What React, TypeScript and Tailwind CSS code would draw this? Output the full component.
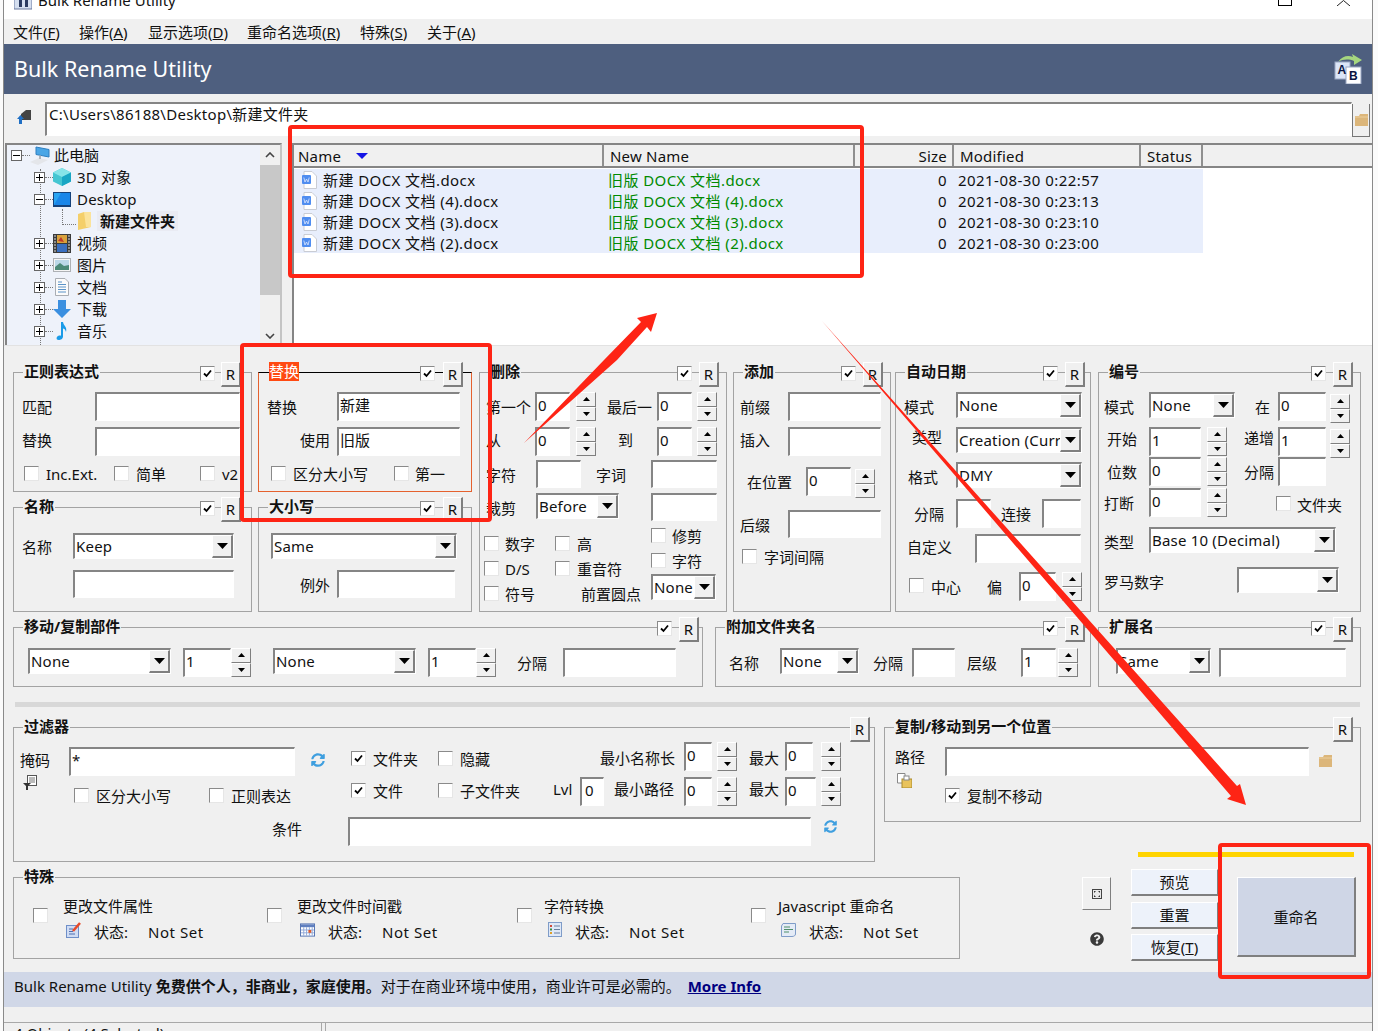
import type { ReactNode } from "react";
import { twMerge as cn } from "tailwind-merge";
import { FaQuestionCircle, FaSyncAlt } from "react-icons/fa";

type P = { className?: string; children?: ReactNode };

const raised = "bg-[#f0f0f0] border border-t-white border-l-white border-r-[#7f7f7f] border-b-[#7f7f7f]";

function L({ className, children }: P) {
  return <span className={cn("shrink-0 whitespace-nowrap mt-[5px]", className)}>{children}</span>;
}

function Row({ className, children }: P) {
  return <div className={cn("flex items-start", className)}>{children}</div>;
}

function Check({ on, className }: { on?: boolean; className?: string }) {
  return (
    <span className={cn("flex shrink-0 w-[15px] h-[15px] items-center justify-center bg-white border border-t-[#8a8a8a] border-l-[#8a8a8a] border-r-[#e6e6e6] border-b-[#e6e6e6]", className)}>
      {on && (
        <svg width="9" height="9" viewBox="0 0 9 9">
          <path d="M1 4.5 L3.5 7 L8 1.5" fill="none" stroke="#000" strokeWidth="1.8" />
        </svg>
      )}
    </span>
  );
}

function Field({ className, children }: P) {
  return (
    <div className={cn("shrink-0 h-[29px] bg-white border-t-2 border-l-2 border-r border-b border-t-[#858585] border-l-[#858585] border-r-white border-b-white pl-[1px] pt-[1px] overflow-hidden whitespace-nowrap", className)}>
      {children}
    </div>
  );
}

function Select({ className, children }: P) {
  return (
    <div className={cn("shrink-0 flex h-[26px] bg-white border-t-2 border-l-2 border-r border-b border-t-[#858585] border-l-[#858585] border-r-white border-b-white", className)}>
      <span className="flex-1 min-w-0 pl-[1px] pt-[1px] overflow-hidden whitespace-nowrap tracking-[0.2px]">{children}</span>
      <span className={cn(raised, "flex w-[21px] shrink-0 items-center justify-center border-r-2 border-b-2")}>
        <svg width="11" height="6" viewBox="0 0 11 6"><path d="M0 0H11L5.5 6Z" fill="#000" /></svg>
      </span>
    </div>
  );
}

function Spin({ className }: { className?: string }) {
  return (
    <div className={cn("flex flex-col shrink-0 w-[20px] h-[29px]", className)}>
      <span className={cn(raised, "flex h-1/2 items-center justify-center")}>
        <svg width="7" height="4" viewBox="0 0 7 4"><path d="M0 4L3.5 0L7 4Z" fill="#000" /></svg>
      </span>
      <span className={cn(raised, "flex h-1/2 items-center justify-center")}>
        <svg width="7" height="4" viewBox="0 0 7 4"><path d="M0 0L3.5 4L7 0Z" fill="#000" /></svg>
      </span>
    </div>
  );
}

function Group(props: P & { title: ReactNode; ck?: string; rk?: string; check?: boolean; reset?: boolean; titleClass?: string }) {
  const { title, ck, rk, check = true, reset = true, className, titleClass, children } = props;
  return (
    <div className={cn("relative shrink-0 border border-[#a3a3a3]", className)}>
      <span className={cn("absolute left-[9px] -top-[11px] bg-[#f0f0f0] px-[1px] font-bold text-[15px] leading-[19px] whitespace-nowrap", titleClass)}>{title}</span>
      {check && <Check on className={cn("absolute -top-[7px] right-[34px]", ck)} />}
      {reset && <span className={cn(raised, "absolute -top-[11px] right-[7px] flex w-[20px] h-[25px] items-center justify-center border-r-2 border-b-2", rk)}>R</span>}
      {children}
    </div>
  );
}

function DocIcon() {
  return (
    <svg width="16" height="18" viewBox="0 0 16 18" className="shrink-0">
      <path d="M3 .5H11L15.5 5V17.5H3Z" fill="#fff" stroke="#c9ccd4" />
      <rect x="1" y="4" width="9" height="9" rx="1" fill="#4f8df0" />
      <path d="M2.8 6.5L4 11L5.5 8L7 11L8.2 6.5" fill="none" stroke="#dfe9fd" strokeWidth=".8" />
    </svg>
  );
}

function FolderTan() {
  return (
    <svg width="13" height="12" viewBox="0 0 13 12" className="shrink-0">
      <path d="M0 2H4L5 0H13V12H0Z" fill="#dcb67a" />
      <path d="M0 3H13" stroke="#eccf9d" />
    </svg>
  );
}

function Exp({ open }: { open?: boolean }) {
  return (
    <span className="relative flex w-[11px] h-[11px] shrink-0 items-center justify-center border border-[#666] bg-white">
      <span className="w-[7px] h-px bg-black" />
      {!open && <span className="absolute w-px h-[7px] bg-black" />}
    </span>
  );
}

const dots = "shrink-0 h-0 border-t border-dotted border-[#777]";

const treeItems: { name: string; icon: ReactNode; open?: boolean }[] = [
  {
    name: "3D 对象",
    icon: (
      <svg width="18" height="18" viewBox="0 0 18 18">
        <path d="M9 0L18 4.5V13.5L9 18L0 13.5V4.5Z" fill="#45c6d2" />
        <path d="M9 0L18 4.5L9 9L0 4.5Z" fill="#86e4e8" />
        <path d="M9 9L18 4.5V13.5L9 18Z" fill="#19a6c4" />
      </svg>
    ),
  },
  {
    name: "Desktop",
    open: true,
    icon: (
      <svg width="18" height="15" viewBox="0 0 18 15">
        <rect width="18" height="15" fill="#15427a" />
        <path d="M1 1H17V13H1Z" fill="#29a4f2" />
        <path d="M1 13L8 1H17V13Z" fill="#1a86e8" />
      </svg>
    ),
  },
];

const treeItems2: { name: string; icon: ReactNode }[] = [
  {
    name: "视频",
    icon: (
      <svg width="18" height="19" viewBox="0 0 18 19">
        <rect width="18" height="19" fill="#3b3b3b" />
        <rect x="4" y="1" width="10" height="8" fill="#d9a23c" />
        <rect x="4" y="10" width="10" height="8" fill="#3a6fc0" />
        <path d="M5 7L8 3L11 8Z" fill="#c0392b" />
        <path d="M1 2H3M1 5H3M1 8H3M1 11H3M1 14H3M1 17H3M15 2H17M15 5H17M15 8H17M15 11H17M15 14H17M15 17H17" stroke="#ddd" />
      </svg>
    ),
  },
  {
    name: "图片",
    icon: (
      <svg width="18" height="14" viewBox="0 0 18 14">
        <rect x=".5" y=".5" width="17" height="13" fill="#f5f5f5" stroke="#aeb1b5" />
        <rect x="2" y="2" width="14" height="10" fill="#bcd8e8" />
        <path d="M2 9L7 5L11 8L16 7V12H2Z" fill="#4d8a78" />
      </svg>
    ),
  },
  {
    name: "文档",
    icon: (
      <svg width="18" height="18" viewBox="0 0 18 18">
        <path d="M2.5 .5H12L15.5 4V17.5H2.5Z" fill="#fbfbfb" stroke="#a9adb3" />
        <path d="M5 4H9M5 6.5H13M5 9H13M5 11.5H13M5 14H13" stroke="#5a93c8" />
      </svg>
    ),
  },
  {
    name: "下载",
    icon: (
      <svg width="18" height="18" viewBox="0 0 18 18">
        <path d="M5 0H13V9H18L9 18L0 9H5Z" fill="#3a8fe0" />
      </svg>
    ),
  },
  {
    name: "音乐",
    icon: (
      <svg width="18" height="18" viewBox="0 0 18 18">
        <path d="M8 0H10C10.5 4 14.5 4.5 13 10C12.5 7.5 11 6.5 10 6.5V14.5C10 17 7.5 18 5.8 18C3.8 18 3.2 16.5 3.8 15.2C4.5 14 6.5 13.2 8 13.8Z" fill="#1a9be8" />
      </svg>
    ),
  },
];

const files = [
  ["新建 DOCX 文档.docx", "旧版 DOCX 文档.docx", "2021-08-30 0:22:57"],
  ["新建 DOCX 文档 (4).docx", "旧版 DOCX 文档 (4).docx", "2021-08-30 0:23:13"],
  ["新建 DOCX 文档 (3).docx", "旧版 DOCX 文档 (3).docx", "2021-08-30 0:23:10"],
  ["新建 DOCX 文档 (2).docx", "旧版 DOCX 文档 (2).docx", "2021-08-30 0:23:00"],
];

function Tree() {
  return (
    <div className="relative flex ml-px w-[277px] shrink-0 bg-[#eef2fa] border-t-2 border-l-2 border-[#858585] border-r-2 border-r-[#c4c4c4]">
      <div className="absolute left-[33px] top-[24px] bottom-0 border-l border-dotted border-[#777]" />
      <div className="flex-1 min-w-0 -mt-px">
        <div className="flex items-center h-[22px] pl-[4px]">
          <Exp open />
          <span className={cn(dots, "w-[8px]")} />
          <svg width="20" height="19" viewBox="0 0 20 19" className="shrink-0">
            <path d="M6 1L19 3.5V11L6 8.5Z" fill="#4aa6e6" stroke="#2e7fc0" />
            <path d="M0 16L9 12L18 14L8 19Z" fill="#e4e6ea" />
            <path d="M10 9.5V13" stroke="#aeb4bb" strokeWidth="2" />
          </svg>
          <span className="ml-[4px]">此电脑</span>
        </div>
        {treeItems.map((t) => (
          <div key={t.name} className="relative flex items-center h-[22px] pl-[27px]">
            <Exp open={t.open} />
            <span className={cn(dots, "w-[8px]")} />
            <span className="flex w-[18px] shrink-0 justify-center">{t.icon}</span>
            <span className="ml-[6px] tracking-[0.2px]">{t.name}</span>
          </div>
        ))}
        <div className="flex items-center h-[22px] pl-[55px]">
          <span className="shrink-0 w-[14px] h-[16px] -mt-[9px] border-l border-b border-dotted border-[#777]" />
          <svg width="13" height="18" viewBox="0 0 13 18" className="shrink-0 ml-[2px]">
            <path d="M0 2L6 0H13V15L0 18Z" fill="#f4cf6a" />
            <path d="M6 0H13V15H8Z" fill="#fbe39b" />
          </svg>
          <span className="ml-[6px] px-[3px] bg-[#e9ebf3] font-bold">新建文件夹</span>
        </div>
        {treeItems2.map((t) => (
          <div key={t.name} className="relative flex items-center h-[22px] pl-[27px]">
            <Exp />
            <span className={cn(dots, "w-[8px]")} />
            <span className="flex w-[18px] shrink-0 justify-center">{t.icon}</span>
            <span className="ml-[6px]">{t.name}</span>
          </div>
        ))}
      </div>
      <div className="flex flex-col items-center w-[20px] shrink-0 bg-[#f0f0f0]">
        <span className="flex h-[20px] items-center">
          <svg width="10" height="6" viewBox="0 0 10 6"><path d="M1 5L5 1L9 5" fill="none" stroke="#444" strokeWidth="1.6" /></svg>
        </span>
        <span className="w-full h-[130px] bg-[#c8c8c8]" />
        <span className="flex flex-1 items-end pb-[6px]">
          <svg width="10" height="6" viewBox="0 0 10 6"><path d="M1 1L5 5L9 1" fill="none" stroke="#444" strokeWidth="1.6" /></svg>
        </span>
      </div>
    </div>
  );
}

function FileList() {
  const head = "flex items-center h-full border-r-2 border-[#8f8f8f] border-b-0 shrink-0 tracking-[0.2px]";
  return (
    <div className="ml-[10px] flex-1 bg-white border-t-2 border-l-2 border-[#858585]">
      <div className="flex h-[23px] bg-[#f0f0f0] border-b-2 border-[#858585]">
        <div className={cn(head, "w-[310px] pl-[4px]")}>
          Name
          <svg width="12" height="6" viewBox="0 0 12 6" className="ml-[15px]"><path d="M0 0H12L6 6Z" fill="#1414e6" /></svg>
        </div>
        <div className={cn(head, "w-[251px] pl-[6px]")}>New Name</div>
        <div className={cn(head, "w-[99px] justify-end pr-[5px]")}>Size</div>
        <div className={cn(head, "w-[187px] pl-[6px]")}>Modified</div>
        <div className={cn(head, "w-[62px] pl-[6px]")}>Status</div>
      </div>
      <div className="w-[909px] mt-[1px] bg-[#e8eefc]">
        {files.map(([a, b, d]) => (
          <div key={a} className="flex items-center h-[21px] whitespace-nowrap tracking-[0.42px]">
            <span className="flex items-center w-[310px] shrink-0 pl-[7px]">
              <DocIcon />
              <span className="ml-[6px]">{a}</span>
            </span>
            <span className="w-[251px] shrink-0 pl-[4px] text-[#008a00]">{b}</span>
            <span className="w-[97px] shrink-0 pr-[5px] text-right">0</span>
            <span className="pl-[6px] tracking-[0.45px]">{d}</span>
          </div>
        ))}
      </div>
    </div>
  );
}

function SpecialItem(p: { w: string; col: string; label: string; icon: ReactNode }) {
  return (
    <div className={cn("flex shrink-0", p.w)}>
      <Check className="mt-[30px]" />
      <div className={cn("flex flex-col", p.col)}>
        <span className="mt-[18px] whitespace-nowrap">{p.label}</span>
        <div className="flex items-center mt-[6px] h-[20px]">
          <span className="flex w-[15px] ml-[3px] justify-center -mt-[5px]">{p.icon}</span>
          <span className="ml-[13px] w-[54px]">状态:</span>
          <span className="tracking-[0.55px]">Not Set</span>
        </div>
      </div>
    </div>
  );
}

export default function App() {
  const sideBtn = "flex h-[27px] items-center justify-center bg-[#edf2fa] border border-t-white border-l-white border-r-[#7f7f7f] border-b-2 border-b-[#7f7f7f]";
  return (
    <div className="relative w-[1378px] h-[1031px] overflow-hidden bg-[#fbfbfb] text-[15px] leading-[20px] text-[#111] font-['Noto_Sans','Noto_Sans_CJK_SC',sans-serif]">
      <div className="ml-[3px] w-[1370px] h-full border-x border-[#8a8a8a] bg-[#f0f0f0]">
        <div className="flex h-[19px] overflow-hidden bg-white pl-[10px]">
          <svg width="18" height="10" viewBox="0 0 18 10" className="shrink-0">
            <rect y="-6" width="18" height="15" fill="#d5dff0" stroke="#6a7aa0" />
            <path d="M5 0H8V7H5ZM11 0H14V7H11Z" fill="#2a3a60" />
          </svg>
          <span className="ml-[6px] -mt-[10px]">Bulk Rename Utility</span>
          <span className="ml-auto w-[14px] h-[6px] border-x border-b border-black" />
          <svg width="14" height="6" viewBox="0 0 14 6" className="ml-[45px] mr-[21px] shrink-0">
            <path d="M0 6L6.5 0.5L13 6" fill="none" stroke="#222" />
          </svg>
        </div>

        <div className="flex items-center h-[25px] pl-[9px]">
          <span className="w-[66px] shrink-0">文件(<u>F</u>)</span>
          <span className="w-[69px] shrink-0">操作(<u>A</u>)</span>
          <span className="w-[99px] shrink-0">显示选项(<u>D</u>)</span>
          <span className="w-[113px] shrink-0">重命名选项(<u>R</u>)</span>
          <span className="w-[67px] shrink-0">特殊(<u>S</u>)</span>
          <span>关于(<u>A</u>)</span>
        </div>

        <div className="flex items-center justify-between h-[50px] pl-[10px] pr-[10px] bg-[#4e5f7f]">
          <span className="text-[21.5px] leading-[28px] text-white">Bulk Rename Utility</span>
          <svg width="28" height="30" viewBox="0 0 28 30">
            <path d="M4 8C8 2 14 1 19 3L18 0L28 6L20 11L20 7C15 5 9 5 4 8Z" fill="#a6d77f" />
            <rect x="1" y="8" width="15" height="17" fill="#dbe5f7" stroke="#9aa8c4" />
            <rect x="12" y="13" width="15" height="17" fill="#fff" stroke="#9aa8c4" />
            <text x="3.5" y="20" fontSize="12" fontWeight="700" fill="#0a1440" fontFamily="Liberation Sans">A</text>
            <text x="15" y="26" fontSize="12" fontWeight="700" fill="#0a1440" fontFamily="Liberation Sans">B</text>
          </svg>
        </div>

        <div className="flex h-[49px] pl-[13px]">
          <svg width="14" height="14" viewBox="0 0 14 14" className="shrink-0 mt-[16px]">
            <path d="M4 4L9 0H14V10H4Z" fill="#444" />
            <path d="M0 9L3.5 5L7 9H5V14H2V9Z" fill="#1f6fc4" />
          </svg>
          <Field className="ml-[14px] mt-[8px] w-[1307px] h-[34px] pl-[2px] pt-0 tracking-[0.27px]">C:\Users\86188\Desktop\新建文件夹</Field>
          <span className="flex w-[18px] h-[33px] mt-[10px] items-center justify-center border-x border-b border-[#777] bg-[#f0f0f0]">
            <FolderTan />
          </span>
        </div>

        <div className="flex h-[202px]">
          <Tree />
          <FileList />
        </div>

        <div className="h-[627px] pl-[9px] border-t border-[#e2e2e2]">
          <div className="flex pt-[26px]">
            <div className="shrink-0 w-[239px]">
              <Group title="正则表达式" className="h-[120px]" ck="right-[36px]" rk="right-[10px]">
                <Row className="mt-[19px] ml-[8px]"><L className="w-[73px]">匹配</L><Field className="w-[145px]" /></Row>
                <Row className="mt-[6px] ml-[8px]"><L className="w-[73px] mt-[3px]">替换</L><Field className="w-[145px]" /></Row>
                <Row className="mt-[10px] ml-[10px] items-center h-[15px]">
                  <Check /><L className="ml-[7px] w-[68px] mt-0">Inc.Ext.</L>
                  <Check /><L className="ml-[7px] w-[64px] mt-0">简单</L>
                  <Check /><L className="ml-[7px] mt-0">v2</L>
                </Row>
              </Group>
              <Group title="名称" className="h-[105px] mt-[15px]" ck="right-[36px]" rk="right-[10px]">
                <Row className="mt-[25px] ml-[8px]"><L className="w-[51px] mt-[4px]">名称</L><Select className="w-[161px]">Keep</Select></Row>
                <Row className="mt-[11px] ml-[59px]"><Field className="w-[161px] h-[28px]" /></Row>
              </Group>
            </div>

            <div className="shrink-0 w-[214px] ml-[6px]">
              <Group
                title="替换"
                className="h-[120px] border-[#e5612e] border-t-black"
                titleClass="bg-[#ff4a12] text-white font-normal left-[10px] px-0"
                ck="right-[36px]"
                rk="right-[8px]"
              >
                <Row className="mt-[19px] ml-[8px]"><L className="w-[70px]">替换</L><Field className="w-[123px]">新建</Field></Row>
                <Row className="mt-[6px] ml-[41px]"><L className="w-[37px] mt-[3px]">使用</L><Field className="w-[123px]">旧版</Field></Row>
                <Row className="mt-[10px] ml-[12px] items-center h-[15px]">
                  <Check /><L className="ml-[7px] w-[101px] mt-0">区分大小写</L>
                  <Check /><L className="ml-[6px] mt-0">第一</L>
                </Row>
              </Group>
              <Group title="大小写" className="h-[105px] mt-[15px]" ck="right-[36px]" rk="right-[8px]">
                <Row className="mt-[25px] ml-[12px]"><Select className="w-[186px]">Same</Select></Row>
                <Row className="mt-[11px] ml-[41px]"><L className="w-[37px]">例外</L><Field className="w-[118px] h-[28px]" /></Row>
              </Group>
            </div>

            <Group title="删除" className="w-[248px] h-[240px] ml-[7px]">
              <Row className="mt-[19px] ml-[6px]">
                <L className="w-[49px]">第一个</L><Field className="w-[35px]">0</Field><Spin className="ml-[6px]" />
                <L className="ml-[11px] w-[50px]">最后一</L><Field className="w-[35px]">0</Field><Spin className="ml-[5px]" />
              </Row>
              <Row className="mt-[6px] ml-[6px]">
                <L className="w-[49px] mt-[3px]">从</L><Field className="w-[35px]">0</Field><Spin className="ml-[6px]" />
                <L className="ml-[11px] w-[50px] pl-[11px] mt-[3px]">到</L><Field className="w-[35px]">0</Field><Spin className="ml-[5px]" />
              </Row>
              <Row className="mt-[4px] ml-[6px]">
                <L className="w-[50px]">字符</L><Field className="w-[45px] h-[28px]" />
                <L className="ml-[15px] w-[55px]">字词</L><Field className="w-[66px] h-[28px]" />
              </Row>
              <Row className="mt-[5px] ml-[6px]">
                <L className="w-[50px]">裁剪</L><Select className="w-[83px]">Before</Select>
                <Field className="ml-[32px] w-[66px] h-[28px]" />
              </Row>
              <div className="flex mt-[7px] ml-[4px]">
                <div className="flex flex-col w-[167px] shrink-0 pt-[8px] gap-[10px]">
                  <Row className="items-center h-[15px]">
                    <Check /><L className="ml-[6px] w-[50px] mt-0">数字</L>
                    <Check /><L className="ml-[7px] mt-0">高</L>
                  </Row>
                  <Row className="items-center h-[15px]">
                    <Check /><L className="ml-[6px] w-[50px] mt-0">D/S</L>
                    <Check /><L className="ml-[7px] mt-0">重音符</L>
                  </Row>
                  <Row className="items-center h-[15px]">
                    <Check /><L className="ml-[6px] w-[50px] mt-0">符号</L>
                    <L className="ml-[26px] mt-0">前置圆点</L>
                  </Row>
                </div>
                <div className="flex flex-col">
                  <Row className="items-center h-[15px]"><Check /><L className="ml-[6px] mt-0">修剪</L></Row>
                  <Row className="items-center h-[15px] mt-[10px]"><Check /><L className="ml-[6px] mt-0">字符</L></Row>
                  <Select className="w-[65px] mt-[6px]">None</Select>
                </div>
              </div>
            </Group>

            <Group title="添加" className="w-[158px] h-[240px] ml-[6px]">
              <Row className="mt-[19px] ml-[6px]"><L className="w-[48px]">前缀</L><Field className="w-[93px]" /></Row>
              <Row className="mt-[6px] ml-[6px]"><L className="w-[48px] mt-[3px]">插入</L><Field className="w-[93px]" /></Row>
              <Row className="mt-[11px] ml-[13px] h-[29px]"><L className="w-[59px]">在位置</L><Field className="w-[45px]">0</Field><Spin className="ml-[4px] mt-[2px]" /></Row>
              <Row className="mt-[14px] ml-[6px]"><L className="w-[48px]">后缀</L><Field className="w-[93px] h-[28px]" /></Row>
              <Row className="mt-[11px] ml-[8px] items-center h-[15px]"><Check /><L className="ml-[7px] mt-0">字词间隔</L></Row>
            </Group>

            <Group title="自动日期" className="w-[196px] h-[240px] ml-[4px]" ck="right-[32px]" rk="right-[5px]">
              <Row className="mt-[19px] ml-[8px]"><L className="w-[52px]">模式</L><Select className="w-[126px]">None</Select></Row>
              <Row className="mt-[9px] ml-[16px]"><L className="w-[44px] mt-0">类型</L><Select className="w-[126px]">Creation (Curr</Select></Row>
              <Row className="mt-[9px] ml-[12px]"><L className="w-[48px]">格式</L><Select className="w-[126px]">DMY</Select></Row>
              <Row className="mt-[11px] ml-[18px]">
                <L className="w-[42px]">分隔</L><Field className="w-[35px]" />
                <L className="ml-[10px] w-[41px]">连接</L><Field className="w-[39px]" />
              </Row>
              <Row className="mt-[6px] ml-[11px]"><L className="w-[68px] mt-[3px]">自定义</L><Field className="w-[106px]" /></Row>
              <Row className="mt-[9px] ml-[13px]">
                <Check className="mt-[6px]" /><L className="ml-[7px] w-[56px]">中心</L>
                <L className="w-[32px]">偏</L><Field className="w-[37px]">0</Field><Spin className="ml-[6px]" />
              </Row>
            </Group>

            <Group title="编号" className="w-[263px] h-[240px] ml-[7px]">
              <Row className="mt-[19px] ml-[5px] h-[29px]">
                <L className="w-[45px]">模式</L><Select className="w-[86px]">None</Select>
                <L className="ml-[20px] w-[23px]">在</L><Field className="w-[48px]">0</Field><Spin className="ml-[4px] mt-[2px]" />
              </Row>
              <Row className="mt-[6px] ml-[8px] h-[29px]">
                <L className="w-[42px] mt-[2px]">开始</L><Field className="w-[52px]">1</Field><Spin className="ml-[6px]" />
                <L className="ml-[17px] w-[34px] mt-[1px]">递增</L><Field className="w-[48px]">1</Field><Spin className="ml-[4px] mt-[2px]" />
              </Row>
              <Row className="mt-px ml-[8px] h-[29px]">
                <L className="w-[42px]">位数</L><Field className="w-[52px]">0</Field><Spin className="ml-[6px]" />
                <L className="ml-[17px] w-[34px]">分隔</L><Field className="w-[48px]" />
              </Row>
              <Row className="mt-[2px] ml-[5px] h-[29px]">
                <L className="w-[45px]">打断</L><Field className="w-[52px]">0</Field><Spin className="ml-[6px]" />
                <Check className="ml-[49px] mt-[8px]" /><L className="ml-[6px] mt-[7px]">文件夹</L>
              </Row>
              <Row className="mt-[10px] ml-[5px]"><L className="w-[45px]">类型</L><Select className="w-[187px]">Base 10 (Decimal)</Select></Row>
              <Row className="mt-[14px] ml-[5px]"><L className="w-[133px]">罗马数字</L><Select className="w-[102px]" /></Row>
            </Group>
          </div>

          <div className="flex mt-[15px]">
            <Group title="移动/复制部件" className="w-[690px] h-[60px]" ck="right-[30px]" rk="right-[3px]">
              <Row className="mt-[20px] ml-[14px]">
                <Select className="w-[143px]">None</Select>
                <Field className="ml-[12px] w-[48px]">1</Field><Spin />
                <Select className="ml-[22px] w-[143px]">None</Select>
                <Field className="ml-[12px] w-[48px]">1</Field><Spin />
                <L className="ml-[21px] w-[46px]">分隔</L><Field className="w-[113px]" />
              </Row>
            </Group>
            <Group title="附加文件夹名" className="w-[376px] h-[60px] ml-[12px]" ck="right-[32px]" rk="right-[5px]">
              <Row className="mt-[20px] ml-[13px]">
                <L className="w-[51px]">名称</L><Select className="w-[79px]">None</Select>
                <L className="ml-[14px] w-[39px]">分隔</L><Field className="w-[43px]" />
                <L className="ml-[12px] w-[54px]">层级</L><Field className="w-[35px]">1</Field><Spin className="ml-[2px]" />
              </Row>
            </Group>
            <Group title="扩展名" className="w-[263px] h-[60px] ml-[7px]">
              <Row className="mt-[20px] ml-[17px]">
                <Select className="w-[95px]">Same</Select>
                <Field className="ml-[8px] w-[127px]" />
              </Row>
            </Group>
          </div>

          <div className="ml-[2px] mt-[15px] w-[1345px] h-[5px] bg-[#d8d8d8]" />

          <div className="flex mt-[20px]">
            <Group title="过滤器" check={false} className="w-[862px] h-[135px]" rk="right-[4px]">
              <Row className="mt-[14px] ml-[6px] h-[34px]">
                <L className="w-[49px] mt-[8px]">掩码</L>
                <Field className="w-[226px] mt-[5px]">*</Field>
                <FaSyncAlt className="ml-[16px] mt-[11px] shrink-0 text-[#3f9fdf]" size={14} />
                <Check on className="ml-[26px] mt-[9px]" /><L className="ml-[7px] w-[65px] mt-[7px]">文件夹</L>
                <Check className="mt-[9px]" /><L className="ml-[7px] w-[140px] mt-[7px]">隐藏</L>
                <L className="w-[84px] mt-[6px]">最小名称长</L>
                <Field className="w-[28px]">0</Field><Spin className="ml-[5px]" />
                <L className="ml-[12px] w-[36px] mt-[6px]">最大</L>
                <Field className="w-[28px]">0</Field><Spin className="ml-[8px]" />
              </Row>
              <Row className="mt-px ml-[9px] h-[29px]">
                <svg width="14" height="15" viewBox="0 0 14 15" className="shrink-0 -mt-[2px]">
                  <rect x="4.5" y=".5" width="9" height="10" fill="#fff" stroke="#555" />
                  <path d="M6 3H12M6 5H12M6 7H12" stroke="#777" />
                  <path d="M0 8H8L5 11V15H3V11Z" fill="#333" />
                </svg>
                <Check className="ml-[37px] mt-[11px]" /><L className="ml-[7px] w-[113px] mt-[9px]">区分大小写</L>
                <Check className="mt-[11px]" /><L className="ml-[7px] w-[120px] mt-[9px]">正则表达</L>
                <Check on className="mt-[6px]" /><L className="ml-[7px] w-[65px] mt-[4px]">文件</L>
                <Check className="mt-[6px]" /><L className="ml-[7px] w-[93px] mt-[4px]">子文件夹</L>
                <L className="w-[27px] mt-[2px]">Lvl</L>
                <Field className="w-[24px] pl-[3px]">0</Field>
                <L className="ml-[10px] w-[70px] mt-[2px]">最小路径</L>
                <Field className="w-[28px]">0</Field><Spin className="ml-[5px]" />
                <L className="ml-[12px] w-[36px] mt-[2px]">最大</L>
                <Field className="w-[31px]">0</Field><Spin className="ml-[5px]" />
              </Row>
              <Row className="mt-[11px] ml-[258px]">
                <L className="w-[76px] mt-[2px]">条件</L>
                <Field className="w-[463px]" />
                <FaSyncAlt className="ml-[13px] mt-[3px] shrink-0 text-[#3f9fdf]" size={13} />
              </Row>
            </Group>
            <div className="ml-[9px] w-[477px] shrink-0">
              <Group title="复制/移动到另一个位置" check={false} className="h-[95px]">
                <Row className="mt-[19px] ml-[10px]">
                  <L className="w-[50px] mt-0">路径</L>
                  <Field className="w-[364px]" />
                  <span className="ml-[10px] mt-[8px]"><FolderTan /></span>
                </Row>
                <Row className="-mt-[3px] ml-[12px]">
                  <svg width="15" height="15" viewBox="0 0 15 15" className="shrink-0">
                    <path d="M.5 .5H8V10H.5Z" fill="#fff" stroke="#888" />
                    <rect x="5" y="6" width="10" height="9" fill="#e9c35c" stroke="#a98a2c" />
                    <rect x="7" y="3" width="5" height="4" fill="#fff" stroke="#888" />
                  </svg>
                  <Check on className="ml-[33px] mt-[15px]" />
                  <L className="ml-[7px] mt-[13px]">复制不移动</L>
                </Row>
              </Group>
              <div className="ml-[254px] mt-[30px] w-[216px] h-[5px] bg-[#ffd400]" />
            </div>
          </div>

          <div className="flex">
            <Group title="特殊" check={false} reset={false} className="w-[947px] h-[82px] mt-[15px]">
              <div className="flex pl-[19px]">
                <SpecialItem
                  w="w-[234px]"
                  col="ml-[15px]"
                  label="更改文件属性"
                  icon={
                    <svg width="15" height="16" viewBox="0 0 15 16">
                      <rect x=".5" y="3.5" width="12" height="12" fill="#cfdcf4" stroke="#6f8fc8" />
                      <path d="M3 7H7M3 9.5H7M3 12H9" stroke="#4f6fb0" />
                      <path d="M7 9L14 1" stroke="#e84a2a" strokeWidth="2.5" />
                    </svg>
                  }
                />
                <SpecialItem
                  w="w-[250px]"
                  col="ml-[15px]"
                  label="更改文件时间戳"
                  icon={
                    <svg width="16" height="14" viewBox="0 0 16 14">
                      <rect x=".5" y=".5" width="15" height="13" fill="#fff" stroke="#4f6fb0" />
                      <rect x="1" y="1" width="14" height="3" fill="#5f7fc0" />
                      <path d="M1 7H15M1 10H15M4 4V13M7 4V13M10 4V13M13 4V13" stroke="#8fa8d8" />
                      <rect x="9" y="7" width="3" height="3" fill="#e05a2a" />
                    </svg>
                  }
                />
                <SpecialItem
                  w="w-[234px]"
                  col="ml-[12px]"
                  label="字符转换"
                  icon={
                    <svg width="14" height="15" viewBox="0 0 14 15">
                      <rect x=".5" y=".5" width="13" height="14" fill="#dfe8f7" stroke="#7f9cc8" />
                      <path d="M6 4H12M6 7.5H12M6 11H12" stroke="#6a7f9f" />
                      <path d="M2 3H4V5H2Z" fill="#d04a3a" /><path d="M2 6.5H4V8.5H2Z" fill="#3a8a4a" /><path d="M2 10H4V12H2Z" fill="#e0a02a" />
                    </svg>
                  }
                />
                <SpecialItem
                  w="w-[210px]"
                  col="ml-[12px]"
                  label="Javascript 重命名"
                  icon={
                    <svg width="15" height="14" viewBox="0 0 15 14">
                      <path d="M2 .5H14.5V11C14.5 12.5 13 13.5 11 13.5H.5V3Z" fill="#e4ebf6" stroke="#7f9cc8" />
                      <path d="M3 4H9M3 6.5H12M3 9H8" stroke="#4f8f6a" />
                    </svg>
                  }
                />
              </div>
            </Group>

            <div className="flex flex-col items-center ml-[122px] mt-[15px] w-[29px] shrink-0">
              <span className="flex w-full h-[33px] items-center justify-center bg-[#f0f0f0] border border-t-white border-l-white border-r-[#7f7f7f] border-b-[#7f7f7f]">
                <svg width="10" height="10" viewBox="0 0 10 10">
                  <rect x=".5" y=".5" width="9" height="9" fill="#e8e8e8" stroke="#444" />
                  <path d="M2 2H4L2 4ZM8 2V4L6 2ZM2 8V6L4 8ZM8 8H6L8 6Z" fill="#333" />
                </svg>
              </span>
              <FaQuestionCircle className="mt-[22px] text-[#3a3a3a]" size={14} />
            </div>

            <div className="flex flex-col ml-[20px] w-[87px] shrink-0">
              <span className={cn(sideBtn, "mt-[7px]")}>预览</span>
              <span className={cn(sideBtn, "mt-[6px]")}>重置</span>
              <span className={cn(sideBtn, "mt-[5px]")}>恢复(<u>T</u>)</span>
            </div>

            <span className="flex ml-[19px] mt-[15px] w-[119px] h-[80px] items-center justify-center bg-[#cfd6e6] border border-t-white border-l-white border-r-2 border-b-2 border-r-[#7f7f7f] border-b-[#7f7f7f]">重命名</span>
          </div>
        </div>

        <div className="flex items-center h-[35px] pl-[10px] pb-[7px] bg-[#d0d7e7] whitespace-nowrap">
          <span>Bulk Rename Utility&nbsp;</span>
          <b>免费供个人，非商业，家庭使用。</b>
          <span>对于在商业环境中使用，商业许可是必需的。</span>
          <a className="ml-[7px] font-bold text-[#000080] underline">More Info</a>
        </div>

        <div className="flex mt-[15px] h-[9px] overflow-hidden border-t border-[#a8a8a8]">
          <span className="w-[318px] shrink-0 pl-[10px] border-r border-[#a8a8a8] whitespace-nowrap">4 Objects (4 Selected)</span>
          <span className="ml-[3px] flex-1 border-l border-[#a8a8a8]" />
        </div>
      </div>

      {/* markup drawn over the screenshot */}
      <div className="absolute left-[288px] top-[125px] w-[576px] h-[153px] border-4 border-[#fe2415] rounded-[4px]" />
      <div className="absolute left-[240px] top-[343px] w-[252px] h-[179px] border-4 border-[#fe2415] rounded-[4px]" />
      <div className="absolute left-[1218px] top-[843px] w-[153px] h-[136px] border-4 border-[#fe2415] rounded-[4px]" />
      <svg className="absolute left-0 top-0 pointer-events-none" width="1378" height="1031">
        <polygon points="524,443 604,360 641,322 637,318 657,313 651,332 647,327 617,360" fill="#fe2415" />
        <polygon points="822,321 1237,786 1240,784 1246,805 1227,799 1231,796" fill="#fe2415" />
      </svg>
    </div>
  );
}
